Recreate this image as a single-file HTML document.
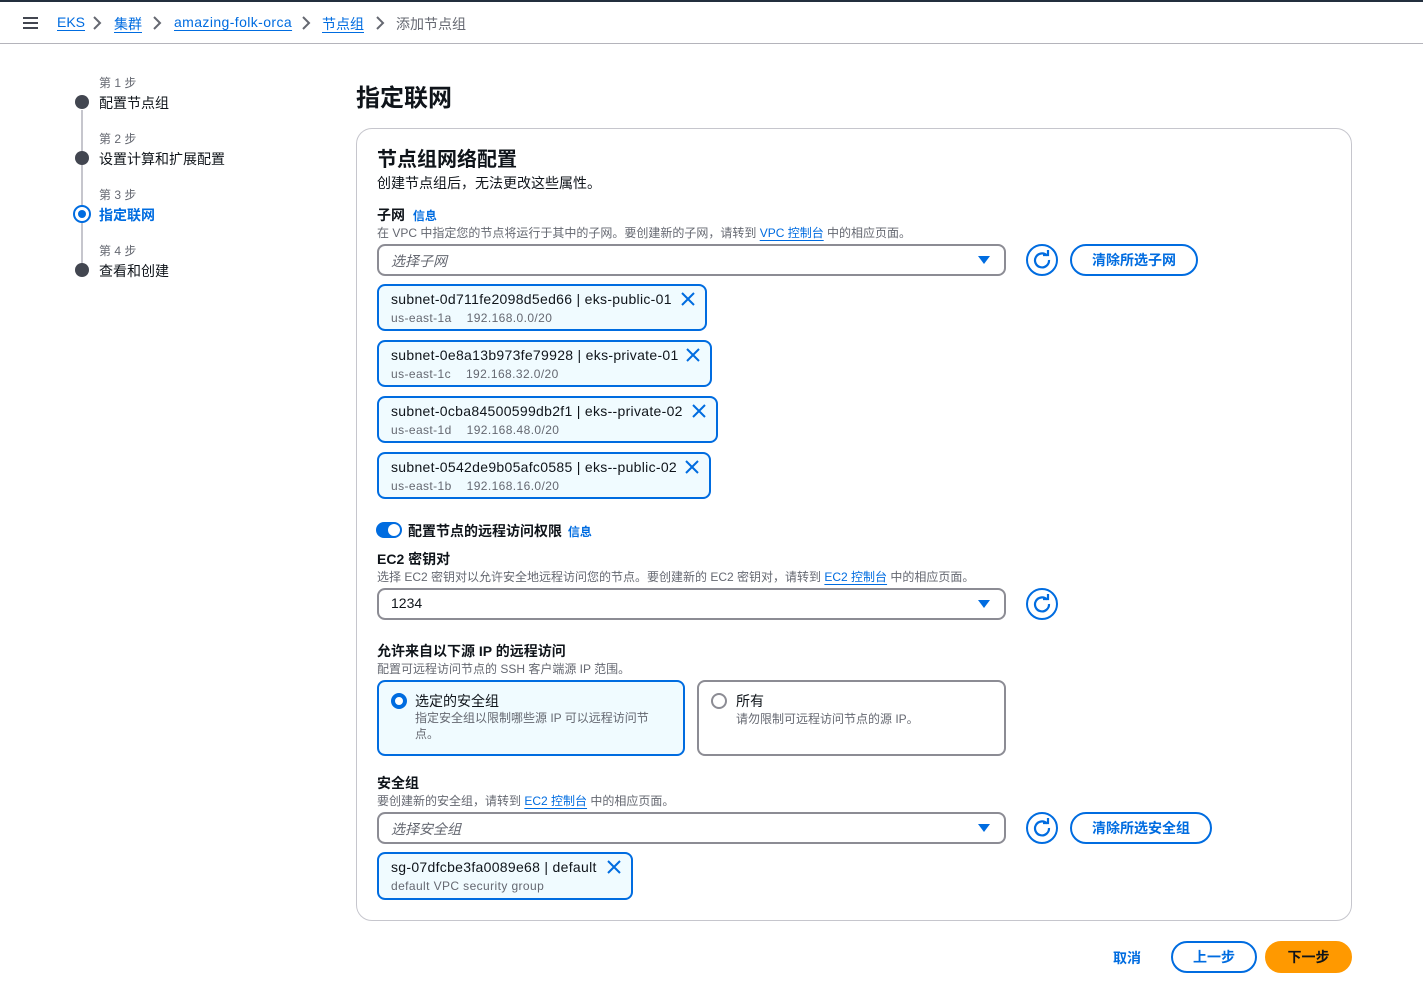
<!DOCTYPE html>
<html><head><meta charset="utf-8"><style>
*{box-sizing:border-box;margin:0;padding:0}
body{width:1423px;height:984px;background:#fff;font-family:"Liberation Sans","Noto Sans CJK SC",sans-serif;color:#0f141a;position:relative;overflow:hidden;font-size:14px}
.a{position:absolute;white-space:nowrap}
.lk{color:#006ce0;text-decoration:underline;text-underline-offset:3px}
.g{color:#656871}
.b{font-weight:bold}
.sel{position:absolute;left:377px;width:629px;height:32px;border:2px solid #8c8c94;border-radius:8px}
.sel .t{position:absolute;left:12px;top:5px;font-size:14px}
.sel .ar{position:absolute;right:14px;top:10px;width:0;height:0;border-left:6px solid transparent;border-right:6px solid transparent;border-top:8px solid #006ce0}
.rf{position:absolute;left:1026px;width:32px;height:32px;border:2px solid #006ce0;border-radius:50%}
.btn{position:absolute;height:32px;border:2px solid #006ce0;border-radius:16px;color:#006ce0;font-weight:bold;text-align:center;line-height:28px;font-size:14px}
.tok{position:absolute;left:377px;height:47px;border:2px solid #006ce0;border-radius:8px;background:#f0fbff}
.tok .l1{position:absolute;left:12px;top:5px;font-size:14px;letter-spacing:0.3px}
.tok .l2{position:absolute;left:12px;top:25px;font-size:12px;color:#656871;letter-spacing:0.4px}
.tok .x{position:absolute;right:10px;top:6px}
.dot{position:absolute;left:75px;width:14px;height:14px;border-radius:50%;background:#424650}
.cv{position:absolute;top:16px}
</style></head><body>
<div class="a" style="left:0;top:0;width:1423px;height:2px;background:#232f3e"></div>
<div class="a" style="left:0;top:43px;width:1423px;height:1px;background:#b4b4bb"></div>
<div class="a" style="left:23px;top:17px;width:15px;height:2px;background:#424650;box-shadow:0 5px 0 #424650,0 10px 0 #424650"></div>
<div class="a" style="left:57px;top:14px;font-size:14px"><span class="lk">EKS</span></div>
<svg class="cv" style="left:92px" width="10" height="14"><path d="M2 1l6 6-6 6" fill="none" stroke="#656871" stroke-width="2"/></svg>
<div class="a" style="left:114px;top:14px"><span class="lk">集群</span></div>
<svg class="cv" style="left:152px" width="10" height="14"><path d="M2 1l6 6-6 6" fill="none" stroke="#656871" stroke-width="2"/></svg>
<div class="a" style="left:174px;top:14px;letter-spacing:0.4px"><span class="lk">amazing-folk-orca</span></div>
<svg class="cv" style="left:301px" width="10" height="14"><path d="M2 1l6 6-6 6" fill="none" stroke="#656871" stroke-width="2"/></svg>
<div class="a" style="left:322px;top:14px"><span class="lk">节点组</span></div>
<svg class="cv" style="left:375px" width="10" height="14"><path d="M2 1l6 6-6 6" fill="none" stroke="#656871" stroke-width="2"/></svg>
<div class="a g" style="left:396px;top:14px">添加节点组</div>

<div class="a" style="left:81px;top:110px;width:2px;height:160px;background:#c6c6cd"></div>
<div class="a g" style="left:99px;top:74px;font-size:12px">第 1 步</div>
<div class="dot" style="top:95px"></div><div class="a" style="left:99px;top:93px">配置节点组</div>
<div class="a g" style="left:99px;top:130px;font-size:12px">第 2 步</div>
<div class="dot" style="top:151px"></div><div class="a" style="left:99px;top:149px">设置计算和扩展配置</div>
<div class="a g" style="left:99px;top:186px;font-size:12px">第 3 步</div>
<div class="a" style="left:73px;top:205px;width:18px;height:18px;border-radius:50%;border:2px solid #006ce0;background:#fff"><div style="margin:3px;width:8px;height:8px;border-radius:50%;background:#006ce0"></div></div>
<div class="a b" style="left:99px;top:205px;color:#006ce0">指定联网</div>
<div class="a g" style="left:99px;top:242px;font-size:12px">第 4 步</div>
<div class="dot" style="top:263px"></div><div class="a" style="left:99px;top:261px">查看和创建</div>

<div class="a b" style="left:356px;top:78px;font-size:24px">指定联网</div>
<div class="a" style="left:356px;top:128px;width:996px;height:793px;border:1px solid #c6c6cd;border-radius:16px"></div>
<div class="a b" style="left:377px;top:143px;font-size:20px">节点组网络配置</div>
<div class="a" style="left:377px;top:173px">创建节点组后，无法更改这些属性。</div>
<div class="a b" style="left:377px;top:205px">子网 <span style="color:#006ce0;font-size:12px;margin-left:4px">信息</span></div>
<div class="a g" style="left:377px;top:224px;font-size:12px">在 VPC 中指定您的节点将运行于其中的子网。要创建新的子网，请转到 <span class="lk">VPC 控制台</span> 中的相应页面。</div>
<div class="sel" style="top:244px"><span class="t g" style="font-style:italic">选择子网</span><span class="ar"></span></div>
<div class="rf" style="top:244px"><svg width="28" height="28" viewBox="0 0 28 28"><path d="M19 9.5A7 7 0 1 0 21 14" fill="none" stroke="#006ce0" stroke-width="2.2"/><path d="M15 9h5V4" fill="none" stroke="#006ce0" stroke-width="2.2"/></svg></div>
<div class="btn" style="left:1070px;top:244px;width:128px">清除所选子网</div>

<div class="tok" style="top:284px;width:330px"><span class="l1">subnet-0d711fe2098d5ed66 | eks-public-01</span><span class="l2">us-east-1a &nbsp;&nbsp;&nbsp;192.168.0.0/20</span><svg class="x" width="14" height="14"><path d="M1 1L13 13M13 1L1 13" stroke="#006ce0" stroke-width="2"/></svg></div>
<div class="tok" style="top:340px;width:335px"><span class="l1">subnet-0e8a13b973fe79928 | eks-private-01</span><span class="l2">us-east-1c &nbsp;&nbsp;&nbsp;192.168.32.0/20</span><svg class="x" width="14" height="14"><path d="M1 1L13 13M13 1L1 13" stroke="#006ce0" stroke-width="2"/></svg></div>
<div class="tok" style="top:396px;width:341px"><span class="l1">subnet-0cba84500599db2f1 | eks--private-02</span><span class="l2">us-east-1d &nbsp;&nbsp;&nbsp;192.168.48.0/20</span><svg class="x" width="14" height="14"><path d="M1 1L13 13M13 1L1 13" stroke="#006ce0" stroke-width="2"/></svg></div>
<div class="tok" style="top:452px;width:334px"><span class="l1">subnet-0542de9b05afc0585 | eks--public-02</span><span class="l2">us-east-1b &nbsp;&nbsp;&nbsp;192.168.16.0/20</span><svg class="x" width="14" height="14"><path d="M1 1L13 13M13 1L1 13" stroke="#006ce0" stroke-width="2"/></svg></div>

<div class="a" style="left:376px;top:522px;width:26px;height:16px;border-radius:8px;background:#006ce0"><div style="position:absolute;right:2px;top:2px;width:12px;height:12px;border-radius:50%;background:#fff"></div></div>
<div class="a b" style="left:408px;top:521px">配置节点的远程访问权限 <span style="color:#006ce0;font-size:12px;margin-left:2px">信息</span></div>
<div class="a b" style="left:377px;top:549px">EC2 密钥对</div>
<div class="a g" style="left:377px;top:568px;font-size:12px">选择 EC2 密钥对以允许安全地远程访问您的节点。要创建新的 EC2 密钥对，请转到 <span class="lk">EC2 控制台</span> 中的相应页面。</div>
<div class="sel" style="top:588px"><span class="t">1234</span><span class="ar"></span></div>
<div class="rf" style="top:588px"><svg width="28" height="28" viewBox="0 0 28 28"><path d="M19 9.5A7 7 0 1 0 21 14" fill="none" stroke="#006ce0" stroke-width="2.2"/><path d="M15 9h5V4" fill="none" stroke="#006ce0" stroke-width="2.2"/></svg></div>

<div class="a b" style="left:377px;top:641px">允许来自以下源 IP 的远程访问</div>
<div class="a g" style="left:377px;top:660px;font-size:12px">配置可远程访问节点的 SSH 客户端源 IP 范围。</div>
<div class="a" style="left:377px;top:680px;width:308px;height:76px;border:2px solid #006ce0;border-radius:8px;background:#f0fbff">
<div style="position:absolute;left:12px;top:11px;width:16px;height:16px;border-radius:50%;border:4px solid #006ce0;background:#fff"></div>
<div style="position:absolute;left:36px;top:9px">选定的安全组</div>
<div class="g" style="position:absolute;left:36px;top:28px;font-size:12px;line-height:16px;white-space:normal;width:250px">指定安全组以限制哪些源 IP 可以远程访问节点。</div></div>
<div class="a" style="left:697px;top:680px;width:309px;height:76px;border:2px solid #8c8c94;border-radius:8px">
<div style="position:absolute;left:12px;top:11px;width:16px;height:16px;border-radius:50%;border:2px solid #8c8c94"></div>
<div style="position:absolute;left:37px;top:9px">所有</div>
<div class="g" style="position:absolute;left:37px;top:28px;font-size:12px">请勿限制可远程访问节点的源 IP。</div></div>

<div class="a b" style="left:377px;top:773px">安全组</div>
<div class="a g" style="left:377px;top:792px;font-size:12px">要创建新的安全组，请转到 <span class="lk">EC2 控制台</span> 中的相应页面。</div>
<div class="sel" style="top:812px"><span class="t g" style="font-style:italic">选择安全组</span><span class="ar"></span></div>
<div class="rf" style="top:812px"><svg width="28" height="28" viewBox="0 0 28 28"><path d="M19 9.5A7 7 0 1 0 21 14" fill="none" stroke="#006ce0" stroke-width="2.2"/><path d="M15 9h5V4" fill="none" stroke="#006ce0" stroke-width="2.2"/></svg></div>
<div class="btn" style="left:1070px;top:812px;width:142px">清除所选安全组</div>
<div class="tok" style="top:852px;width:256px;height:48px"><span class="l1">sg-07dfcbe3fa0089e68 | default</span><span class="l2">default VPC security group</span><svg class="x" width="14" height="14"><path d="M1 1L13 13M13 1L1 13" stroke="#006ce0" stroke-width="2"/></svg></div>

<div class="a b" style="left:1113px;top:948px;color:#006ce0">取消</div>
<div class="btn" style="left:1171px;top:941px;width:86px">上一步</div>
<div class="btn" style="left:1265px;top:941px;width:87px;background:#ff9900;border-color:#ff9900;color:#0f141a">下一步</div>
</body></html>
